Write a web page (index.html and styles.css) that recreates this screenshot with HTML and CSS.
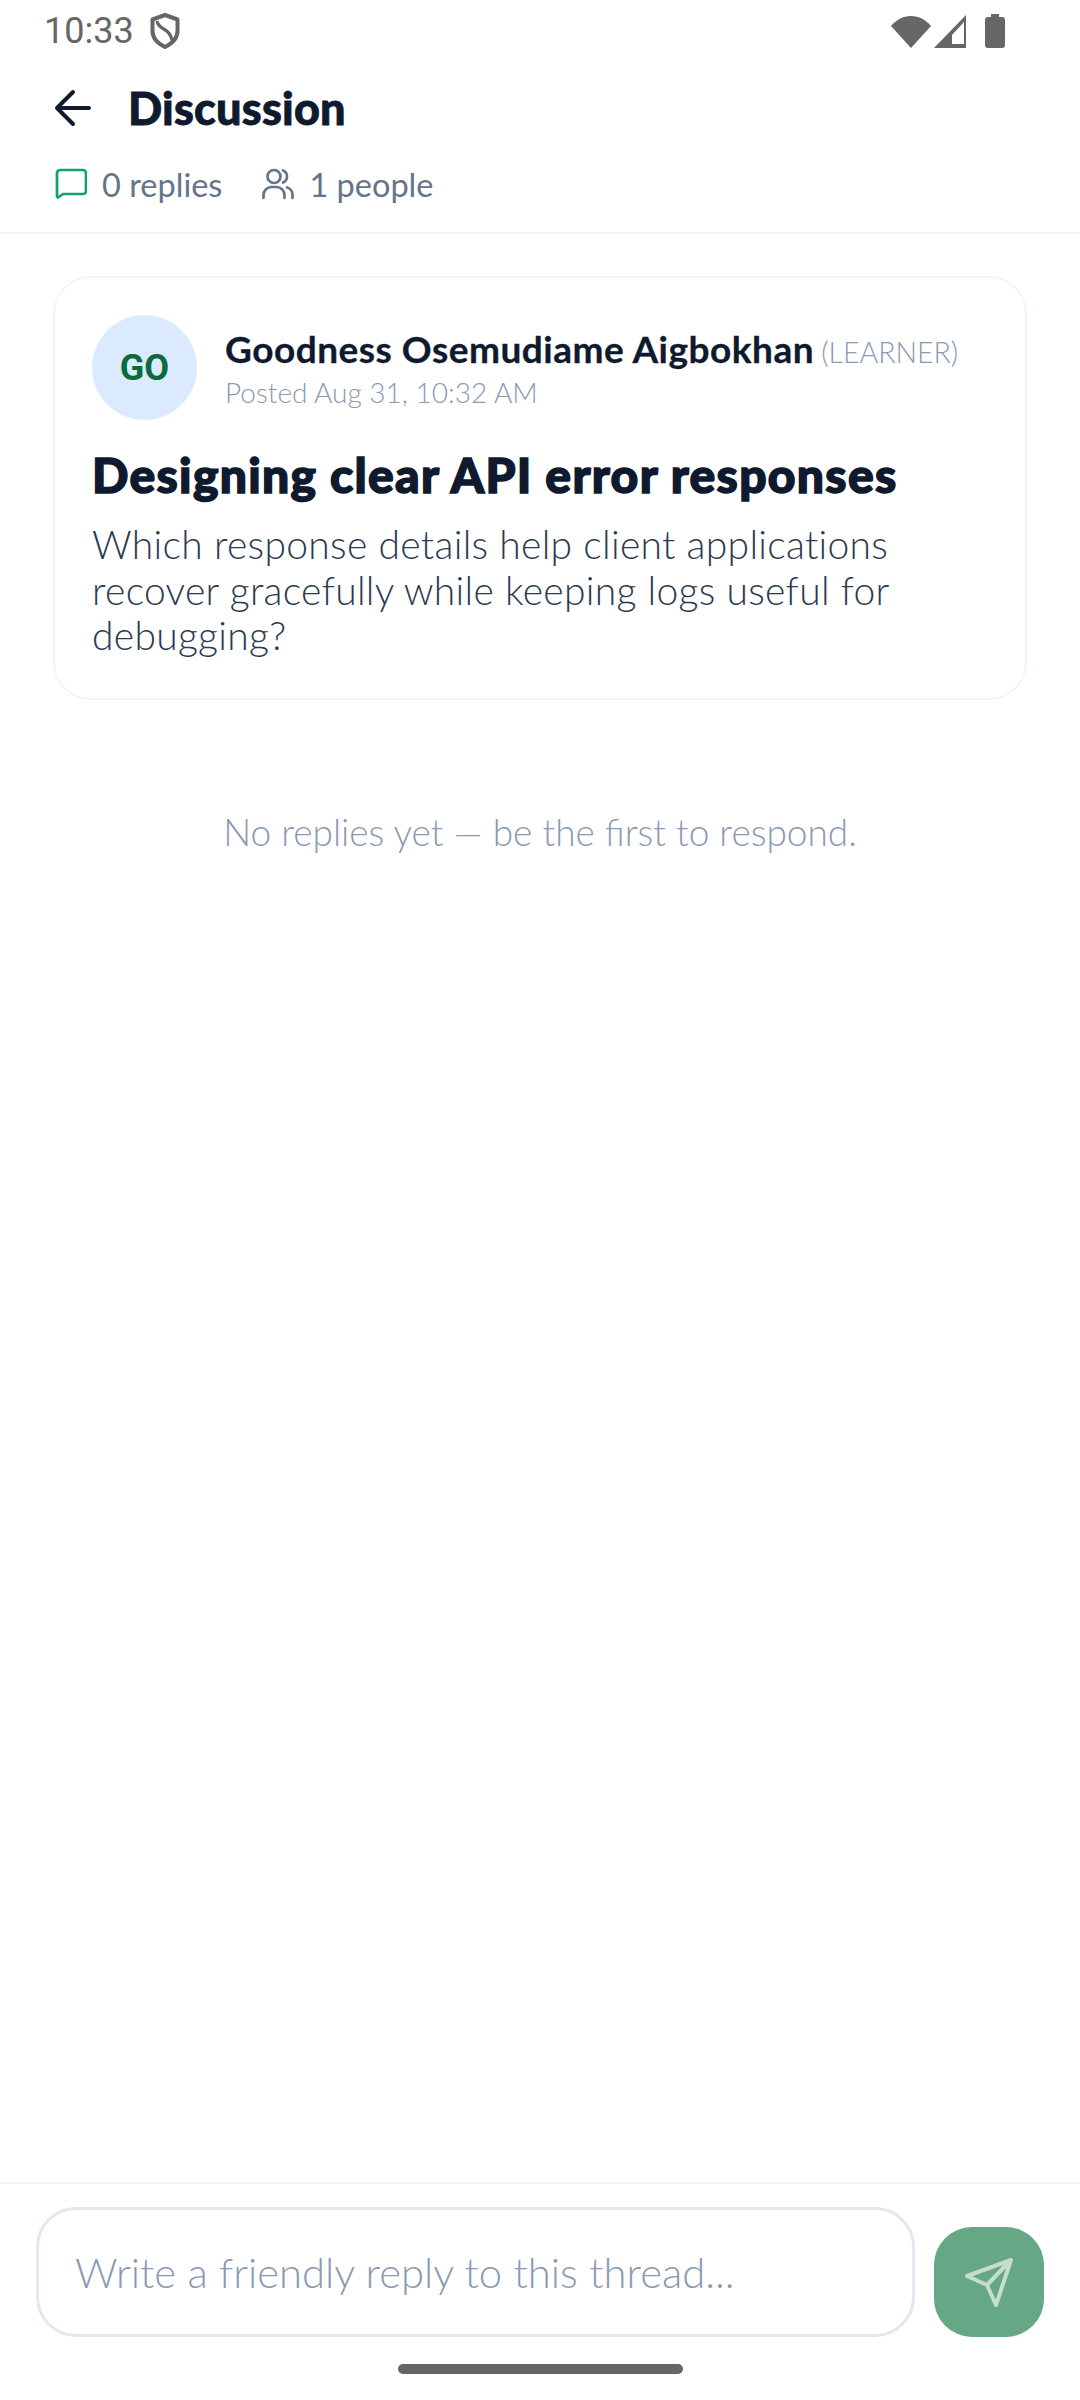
FILE: index.html
```html
<!DOCTYPE html>
<html lang="en">
<head>
<meta charset="utf-8">
<title>Discussion</title>
<link rel="stylesheet" href="styles.css">
</head>
<body>
<div class="screen">
  <div class="status">
    <div class="status-left">
      <span class="time">10:33</span>
      <svg class="shield" viewBox="0 0 30 36" width="30" height="36"><path d="M15 2 27.500 6.500v11.500c0 7.500-5.300 12.500-12.500 16C7.800 30.500 2.500 25.500 2.500 18V6.500Z" fill="none" stroke="#666" stroke-width="4" stroke-linejoin="round"/><path d="M7 8c1 5 4 6.500 7.500 8.500s6.500 5 7.500 11" fill="none" stroke="#666" stroke-width="3.200"/></svg>
    </div>
    <div class="status-right">
      <svg width="40" height="33" viewBox="0 0 40 33"><path d="M0 11C5 5 12 1 20 1s15 4 20 10L20 33Z" fill="#666"/></svg>
      <svg class="signal" width="32" height="33" viewBox="0 0 32 33"><path d="M32 0V33H0ZM30 7 18 20V29H30Z" fill="#666" fill-rule="evenodd"/></svg>
      <svg class="battery" width="20" height="34" viewBox="0 0 20 34"><path d="M6 0h8v3h3a3 3 0 0 1 3 3v25a3 3 0 0 1-3 3H3a3 3 0 0 1-3-3V6a3 3 0 0 1 3-3h3Z" fill="#666"/></svg>
    </div>
  </div>
  <header class="header">
    <div class="title-row">
      <svg class="back" width="44" height="44" viewBox="0 0 44 44"><path d="M38 22H6M22 6 6 22l16 16" fill="none" stroke="#0f1a2e" stroke-width="4" stroke-linecap="round" stroke-linejoin="round"/></svg>
      <h1 class="title">Discussion</h1>
    </div>
    <div class="stats">
      <div class="stat">
        <svg width="32" height="32" viewBox="0 0 32 32"><path d="M2 28.500V5a3 3 0 0 1 3-3h23a3 3 0 0 1 3 3v18a3 3 0 0 1-3 3H8l-5 3.500Z" fill="none" stroke="#0fa36b" stroke-width="2.700" stroke-linejoin="round"/></svg>
        <span>0 replies</span>
      </div>
      <div class="stat">
        <svg width="32" height="32" viewBox="0 0 32 32"><circle cx="12" cy="8.500" r="6.500" fill="none" stroke="#64748b" stroke-width="2.700"/><path d="M1.500 30v-3a8 8 0 0 1 8-8h5a8 8 0 0 1 8 8v3M21 2.500a6.500 6.500 0 0 1 0 12M25 19.500a7.500 7.500 0 0 1 5.500 7.500v3" fill="none" stroke="#64748b" stroke-width="2.700" stroke-linecap="round"/></svg>
        <span>1 people</span>
      </div>
    </div>
  </header>
  <main class="content">
    <article class="card">
      <div class="author">
        <div class="avatar">GO</div>
        <div class="author-text">
          <div class="name-line"><span class="name">Goodness Osemudiame Aigbokhan</span> <span class="role">(LEARNER)</span></div>
          <div class="posted">Posted Aug 31, 10:32 AM</div>
        </div>
      </div>
      <h2 class="post-title">Designing clear API error responses</h2>
      <p class="post-body">Which response details help client applications recover gracefully while keeping logs useful for debugging?</p>
    </article>
    <p class="empty">No replies yet — be the first to respond.</p>
  </main>
  <footer class="composer">
    <div class="composer-row">
      <div class="input">Write a friendly reply to this thread...</div>
      <div class="send">
        <svg width="50" height="50" viewBox="0 0 50 50"><path d="M47 3 3 19l20 9 9 20ZM47 3 23 28" fill="none" stroke="#c6dccf" stroke-width="4" stroke-linejoin="round" stroke-linecap="round"/></svg>
      </div>
    </div>
    <div class="home-bar"></div>
  </footer>
</div>
</body>
</html>
```
FILE: styles.css
```css
* { box-sizing: border-box; }
html, body { margin: 0; padding: 0; background: #fff; }
.screen {
  width: 1080px;
  height: 2400px;
  display: flex;
  flex-direction: column;
  background: #fff;
  font-family: "Lato", "Liberation Sans", sans-serif;
}
.status {
  height: 62px;
  padding: 0 75px 0 44px;
  display: flex;
  align-items: center;
  justify-content: space-between;
  flex: none;
}
.status-left { display: flex; align-items: center; gap: 16px; }
.time { font: 400 36px/40px "Roboto", sans-serif; color: #666; }
.status-right { display: flex; align-items: center; }
.status-right svg { display: block; }
.signal { margin-left: 3px; }
.battery { margin-left: 19px; }
.shield { display: block; }
.header {
  height: 172px;
  flex: none;
  border-bottom: 2px solid #f1f5f9;
  padding-left: 51px;
}
.title-row { display: flex; align-items: center; gap: 33px; height: 64px; margin-top: 14px; }
.back { display: block; flex: none; }
.title {
  margin: 0;
  font-size: 45px;
  line-height: 64px;
  font-weight: 900;
  color: #0f1a2e;
  -webkit-text-stroke: 0.8px #0f1a2e;
  letter-spacing: 0.2px;
}
.stats { display: flex; gap: 40px; margin-top: 24px; padding-left: 4px; height: 40px; align-items: center; }
.stat { display: flex; align-items: center; gap: 15px; font-size: 32.500px; color: #64748b; }
.stat svg { display: block; flex: none; }
.content { flex: 1; padding: 42px 53px 0; }
.card {
  height: 424px;
  border: 2px solid #f1f5f9;
  border-radius: 38px;
  padding: 37px 37px 0;
}
.author { display: flex; align-items: center; gap: 28px; }
.avatar {
  width: 105px;
  height: 105px;
  flex: none;
  border-radius: 50%;
  background: #dbeafe;
  display: flex;
  align-items: center;
  justify-content: center;
  font: 700 36px/1 "Roboto", sans-serif;
  color: #0b6b3a;
}
.author-text { padding-top: 5px; }
.name-line { line-height: 36px; white-space: nowrap; }
.name { font-size: 37px; font-weight: 700; color: #0f1a2e; letter-spacing: 0.5px; -webkit-text-stroke: 0.3px #0f1a2e; }
.role { margin-left: 3px; font-size: 28.500px; font-weight: 300; color: #8a9ab2; }
.posted { font-size: 28px; line-height: 35px; font-weight: 300; color: #8a9ab2; }
.post-title {
  margin: 27px 0 0;
  font-size: 48px;
  line-height: 56px;
  font-weight: 900;
  color: #0f1a2e;
  letter-spacing: 1.3px;
  -webkit-text-stroke: 1.500px #0f1a2e;
  white-space: nowrap;
}
.post-body { margin: 19px 0 0; font-size: 39px; line-height: 45.500px; letter-spacing: 0.3px; font-weight: 300; color: #2b3a50; }
.empty { margin: 110px 0 0; text-align: center; font-size: 37px; line-height: 44px; font-weight: 300; color: #8a9ab2; }
.composer { flex: none; height: 218px; border-top: 2px solid #f1f5f9; }
.composer-row {
  display: flex;
  align-items: flex-end;
  gap: 19px;
  padding: 23px 36px 0 36px;
}
.input {
  flex: 1;
  height: 130px;
  border: 3px solid #e2e8f0;
  border-radius: 40px;
  padding: 0 36px;
  display: flex;
  align-items: center;
  font-size: 41.800px;
  font-weight: 300;
  color: #8a9ab2;
  white-space: nowrap;
}
.send {
  width: 110px;
  height: 110px;
  flex: none;
  border-radius: 38px;
  background: #66a786;
  display: flex;
  align-items: center;
  justify-content: center;
}
.send svg { display: block; }
.home-bar {
  width: 285px;
  height: 10px;
  border-radius: 5px;
  background: #666;
  margin: 27px auto 0;
}
```
